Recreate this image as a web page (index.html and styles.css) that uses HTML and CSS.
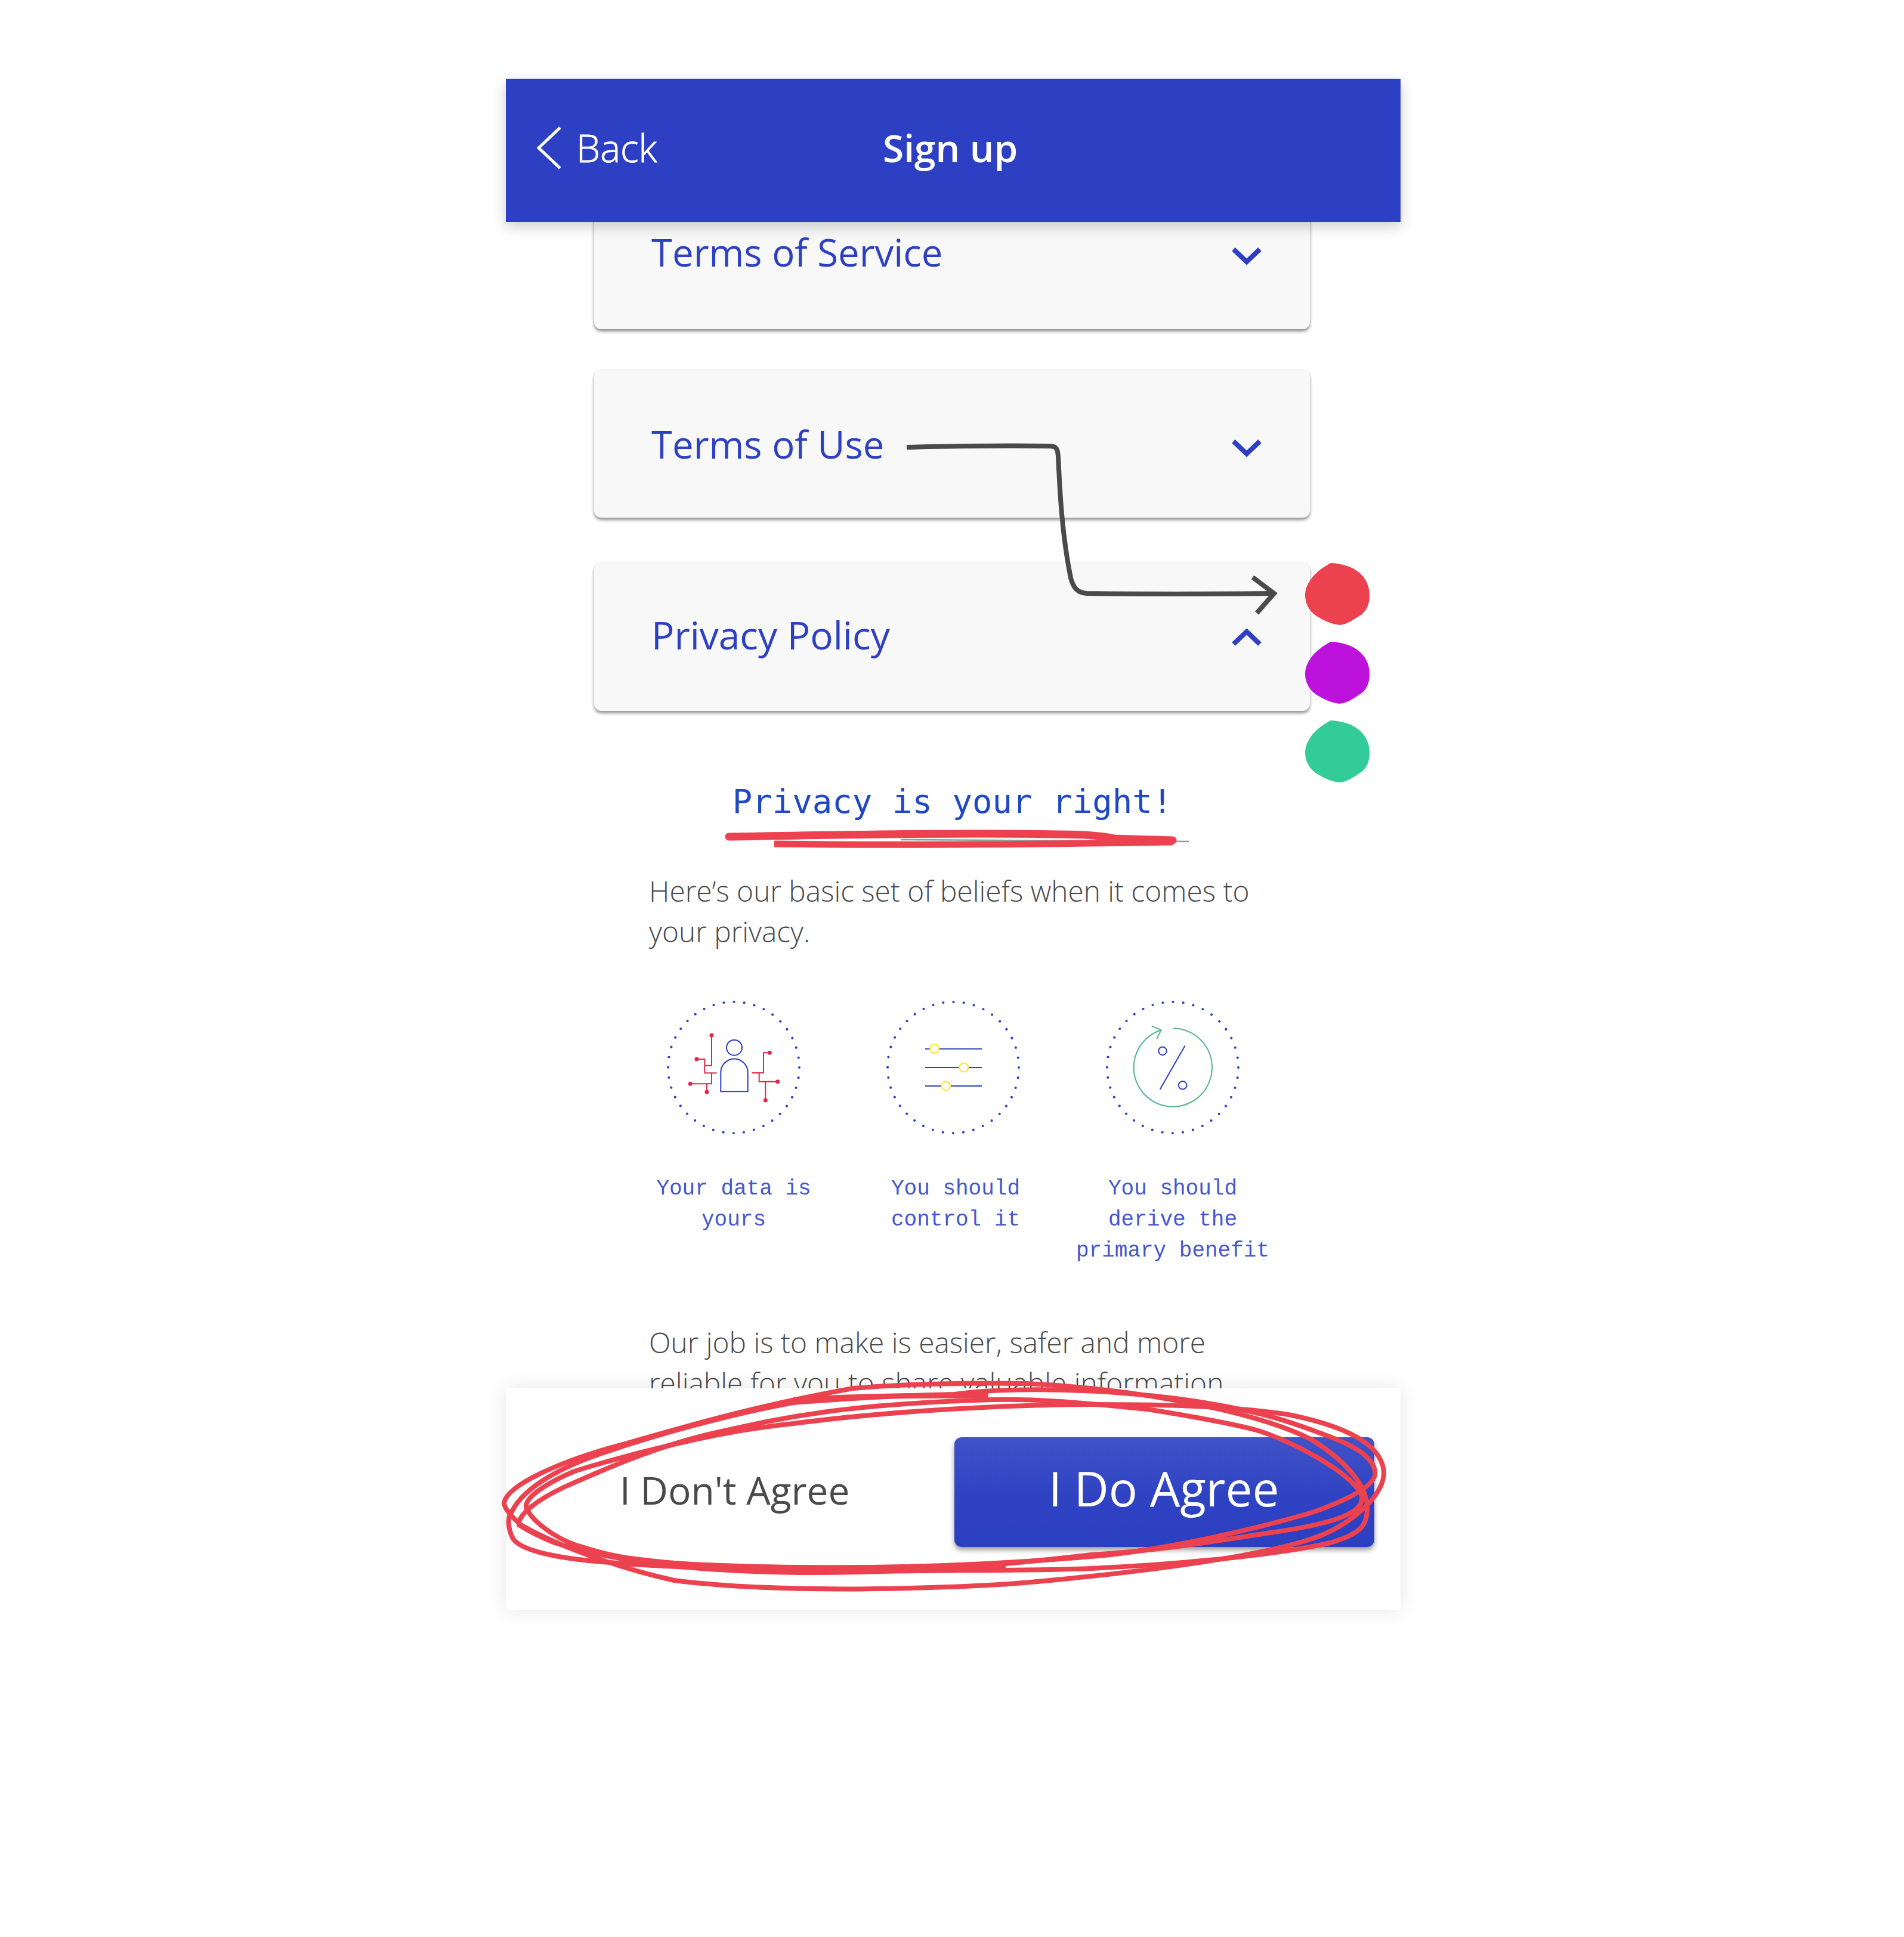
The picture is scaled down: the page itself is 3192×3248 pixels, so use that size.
FILE: index.html
```html
<!DOCTYPE html>
<html>

    <head>
        <meta charset="UTF-8">
        <title>Sign up</title>
        <link rel="stylesheet" href="styles.css">
    </head>

    <body>
        <div class="screen">
            <header class="topbar">
                <div class="back">
                    <svg class="back-icon" width="42" height="72" viewBox="0 0 42 72"><path d="M39 2 L3 36 L39 70"/></svg>
                    <span>Back</span>
                </div>
                <h1 class="title">Sign up</h1>
            </header>

            <main class="scroller">
                <section class="card card-service">
                    <span>Terms of Service</span>
                    <svg class="chevron" width="50" height="30" viewBox="0 0 50 30"><path d="M3 4 L25 25 L47 4"/></svg>
                </section>
                <section class="card card-use">
                    <span>Terms of Use</span>
                    <svg class="chevron" width="50" height="30" viewBox="0 0 50 30"><path d="M3 4 L25 25 L47 4"/></svg>
                </section>
                <section class="card card-privacy">
                    <span class="card-privacy-text">Privacy Policy</span>
                    <svg class="chevron chevron-up" width="50" height="30" viewBox="0 0 50 30"><path d="M3 26 L25 5 L47 26"/></svg>
                </section>

                <h2 class="heading">Privacy is your right!</h2>
                <p class="copy copy-first">Here’s our basic set of beliefs when it comes to your privacy.</p>

                <div class="beliefs">
                    <div class="belief">
                        <svg class="belief-icon" width="240" height="240" viewBox="0 0 240 240">
                            <circle class="ring" cx="120" cy="120" r="110"/>
                            <g class="red-line">
                                <path d="M83 66 V116.7 H71.3"/>
                                <path d="M58 106 H71.3 V129.3 H91.7"/>
                                <path d="M83 129.3 V147.3 H47.3"/>
                                <path d="M75 147.3 V161"/>
                                <path d="M150.3 129 H170 V95.3 H180.3"/>
                                <path d="M162.7 129 V143.7 H193.7"/>
                                <path d="M173.3 143.7 V175"/>
                            </g>
                            <g class="red-node">
                                <circle cx="83" cy="66" r="3.5"/>
                                <circle cx="58" cy="106" r="3.5"/>
                                <circle cx="47.3" cy="147.3" r="3.5"/>
                                <circle cx="75" cy="161" r="3.5"/>
                                <circle cx="180.3" cy="95.3" r="3.5"/>
                                <circle cx="193.7" cy="143.7" r="3.5"/>
                                <circle cx="173.3" cy="175" r="3.5"/>
                            </g>
                            <g class="blue-line">
                                <circle cx="121" cy="86.7" r="13"/>
                                <path d="M98.3 160.3 V128.3 A22.7 22.7 0 0 1 143.7 128.3 V160.3 Z"/>
                            </g>
                        </svg>
                        <p class="belief-label">Your data is yours</p>
                    </div>
                    <div class="belief">
                        <svg class="belief-icon" width="240" height="240" viewBox="0 0 240 240">
                            <circle class="ring" cx="120" cy="120" r="110"/>
                            <g class="blue-line">
                                <path d="M73 88.7 H168"/>
                                <path d="M73 120 H168"/>
                                <path d="M73 151 H168"/>
                            </g>
                            <g class="knob">
                                <circle cx="88.7" cy="88.7" r="7.3"/>
                                <circle cx="137.7" cy="120" r="7.3"/>
                                <circle cx="107.7" cy="151" r="7.3"/>
                            </g>
                        </svg>
                        <p class="belief-label belief-label-mid">You should control it</p>
                    </div>
                    <div class="belief">
                        <svg class="belief-icon" width="240" height="240" viewBox="0 0 240 240">
                            <circle class="ring" cx="120" cy="120" r="110"/>
                            <g class="green-line">
                                <path d="M120.7 54.3 A65.7 65.7 0 1 1 100.7 57.3"/>
                                <path d="M84.7 50.3 L100.7 57.3 L93 72"/>
                            </g>
                            <g class="blue-line">
                                <circle cx="103" cy="92.3" r="6.8"/>
                                <circle cx="136.7" cy="149.7" r="6.8"/>
                                <path d="M140.7 83.3 L98.7 156.7"/>
                            </g>
                        </svg>
                        <p class="belief-label">You should derive the primary benefit</p>
                    </div>
                </div>

                <p class="copy copy-last">Our job is to make is easier, safer and more reliable for you to share valuable information</p>
            </main>

            <footer class="actions">
                <span class="decline">I Don't Agree</span>
                <button class="agree">I Do Agree</button>
            </footer>
        </div>

        <!-- hand drawn marks on top of the mockup -->
        <svg class="marks" width="3192" height="3248" viewBox="0 0 3192 3248">
            <path class="arrow" d="M1520 750 C1600 748 1690 747 1760 748 C1772 748 1773 754 1774 765 C1777 830 1781 900 1795 969 C1800 988 1808 994 1822 995 C1900 996 2040 996 2136 995"/>
            <path class="arrow" d="M2100 968 L2136 995 L2107 1028"/>

            <path class="blob" transform="translate(2188 944)" fill="#ec414f" d="M43 0 C62 1 76 6 85 12 C100 22 108 36 108 55 C108 70 102 82 92 88 C80 96 70 103 58 104 C45 103 30 96 19 89 C7 81 0 68 0 54 C0 42 6 32 12 24 C20 14 32 6 43 0 Z"/>
            <path class="blob" transform="translate(2188 1076)" fill="#bd11dc" d="M43 0 C62 1 76 6 85 12 C100 22 108 36 108 55 C108 70 102 82 92 88 C80 96 70 103 58 104 C45 103 30 96 19 89 C7 81 0 68 0 54 C0 42 6 32 12 24 C20 14 32 6 43 0 Z"/>
            <path class="blob" transform="translate(2188 1208)" fill="#33cc99" d="M43 0 C62 1 76 6 85 12 C100 22 108 36 108 55 C108 70 102 82 92 88 C80 96 70 103 58 104 C45 103 30 96 19 89 C7 81 0 68 0 54 C0 42 6 32 12 24 C20 14 32 6 43 0 Z"/>

            <path class="pencil" d="M1510 1408 L1993 1411"/>
            <g class="scribble">
                <path class="under-top" d="M1222 1403 C1400 1400 1600 1396 1774 1399 C1820 1399 1850 1402 1868 1406 L1966 1409"/>
                <path class="under-low" d="M1298 1415 C1500 1418 1800 1415 1966 1412"/>

                <path d="M845 2520 C850 2490 940 2450 1040 2423 C1130 2398 1250 2360 1430 2328 C1500 2322 1600 2318 1720 2320 C1900 2328 2100 2365 2197 2413 C2250 2445 2295 2490 2292 2533 C2290 2560 2280 2572 2230 2587 C2150 2605 2000 2622 1830 2630 C1700 2635 1400 2635 1130 2625 C1000 2622 880 2610 860 2580 C850 2560 852 2545 856 2535"/>
                <path d="M845 2520 C845 2530 860 2545 873 2557 C950 2600 1050 2632 1130 2650 C1250 2665 1400 2667 1560 2662 C1700 2658 1760 2650 1830 2643 C1950 2630 2110 2610 2200 2580 C2260 2560 2320 2510 2320 2470 C2318 2420 2250 2390 2160 2372 C2050 2355 1900 2355 1830 2355 C1700 2355 1500 2365 1330 2387 C1200 2400 1050 2440 963 2467 C920 2485 880 2510 882 2527"/>
                <path d="M882 2527 C890 2550 930 2578 963 2590 C1010 2605 1040 2612 1073 2615 C1150 2625 1250 2628 1340 2628 C1500 2630 1650 2625 1830 2610 C1950 2600 2100 2565 2197 2537 C2260 2515 2310 2490 2305 2467 C2300 2430 2230 2410 2197 2397 C2150 2380 2120 2372 2097 2367 C2020 2350 1950 2340 1840 2333 C1750 2328 1650 2330 1600 2338 C1500 2340 1420 2345 1330 2352 C1230 2370 1100 2405 1000 2440 C930 2465 870 2500 855 2542"/>
                <path d="M870 2557 C868 2540 900 2515 947 2493 C1010 2465 1100 2425 1197 2403 C1300 2380 1400 2355 1663 2347 C1750 2345 1840 2355 1923 2363 C2000 2375 2080 2390 2113 2400 C2200 2430 2290 2490 2283 2515 C2280 2545 2200 2560 2130 2570 C2050 2582 1950 2600 1830 2607 C1650 2628 1500 2638 1340 2637 C1200 2635 1050 2625 930 2587 C900 2575 885 2567 870 2557"/>
                <path class="under-bundle" d="M1050 2620 C1250 2632 1450 2635 1680 2629"/>
                <path class="under-tail" d="M1330 2347 C1450 2340 1550 2340 1657 2340"/>
            </g>
        </svg>
    </body>

</html>
```

FILE: styles.css
```css
html, body {
    margin: 0;
    background-color: white;
}

body {
    position: relative;
    width: 3192px;
    height: 3248px;
    overflow: hidden;
    font-family: "Open Sans", sans-serif;
}

.screen {
    width: 1500px;
    margin-left: 848px;
    padding-top: 132px;
}

/* top bar */
.topbar {
    position: relative;
    z-index: 2;
    display: flex;
    align-items: center;
    box-sizing: border-box;
    height: 240px;
    padding-bottom: 9px;
    background-color: #2d40c4;
    color: white;
    box-shadow: 0 8px 22px rgba(0, 0, 0, 0.2);
}

.back {
    display: flex;
    align-items: center;
    gap: 24px;
    width: 580px;
    padding-left: 52px;
    font-size: 64px;
    font-weight: 300;
    -webkit-text-stroke: 1px white;
}

.back-icon path {
    fill: none;
    stroke: white;
    stroke-width: 5;
}

.title {
    margin: 0;
    font-size: 64px;
    font-weight: 600;
}

/* scrolling part */
.scroller {
    height: 1956px;
    overflow: hidden;
}

.card {
    display: flex;
    align-items: center;
    justify-content: space-between;
    width: 1200px;
    box-sizing: border-box;
    margin-left: 148px;
    padding: 0 81px 0 96px;
    border-radius: 12px;
    background-color: #f8f8f8;
    color: #2d40c4;
    font-size: 63.5px;
    box-shadow: 0 4px 5px rgba(0, 0, 0, 0.4), 0 0 4px rgba(0, 0, 0, 0.07);
}

.card-service {
    height: 260px;
    margin-top: -80px;
}

.card-use {
    height: 248px;
    margin-top: 68px;
}

.card-privacy {
    height: 248px;
    margin-top: 76px;
}

.card-privacy-text {
    margin-bottom: 8px;
    font-size: 64px;
}

.chevron {
    margin-top: 14px;
}

.chevron-up {
    margin-top: 2px;
}

.chevron path {
    fill: none;
    stroke: #2d40c4;
    stroke-width: 8;
}

.heading {
    margin: 117px 0 0 0;
    padding-right: 3px;
    text-align: center;
    font-family: "DejaVu Sans Mono", monospace;
    font-size: 55.7px;
    font-weight: 400;
    line-height: 70px;
    color: #1f49c4;
}

.copy {
    width: 1070px;
    margin: 0 0 0 240px;
    font-size: 47.8px;
    font-weight: 300;
    line-height: 68px;
    color: #4a4a4a;
}

.copy-first {
    margin-top: 81px;
}

.copy-last {
    margin-top: 93px;
}

/* three round icons */
.beliefs {
    display: grid;
    grid-template-columns: repeat(3, 368px);
    margin: 74px 0 0 198px;
}

.belief {
    text-align: center;
}

.belief-icon {
    display: block;
    margin: 0 auto;
}

.belief-label {
    width: 340px;
    margin: 58px auto 0 auto;
    font-family: "Liberation Mono", monospace;
    font-size: 36px;
    line-height: 52px;
    color: #4456d0;
}

.belief-label-mid {
    padding-left: 8px;
    box-sizing: border-box;
}

.ring {
    fill: none;
    stroke: #2d40c4;
    stroke-width: 4.2;
    stroke-linecap: round;
    stroke-dasharray: 0 17.279;
}

.red-line path {
    fill: none;
    stroke: #e0264b;
    stroke-width: 2;
}

.red-node {
    fill: #e0264b;
}

.blue-line circle,
.blue-line path {
    fill: none;
    stroke: #2d40c4;
    stroke-width: 2;
}

.knob {
    fill: white;
    stroke: #ffe733;
    stroke-width: 2.2;
}

.green-line path {
    fill: none;
    stroke: #55b58f;
    stroke-width: 2;
}

/* bottom buttons */
.actions {
    position: relative;
    z-index: 2;
    display: flex;
    align-items: center;
    justify-content: space-between;
    box-sizing: border-box;
    height: 372px;
    padding: 0 44px 24px 191px;
    background-color: white;
    box-shadow: 0 0 30px rgba(0, 0, 0, 0.1);
}

.decline {
    margin-bottom: 8px;
    font-size: 64px;
    color: #4a4a4a;
}

.agree {
    width: 704px;
    height: 184px;
    padding: 0 2px 16px 0;
    border: 0;
    border-radius: 12px;
    background: linear-gradient(to bottom, #4152c8, #2e42c2 55%, #2b3fc1);
    color: white;
    font-family: "Open Sans", sans-serif;
    font-size: 80px;
    box-shadow: 0 5px 8px rgba(0, 0, 0, 0.4);
}

/* annotations */
.marks {
    position: absolute;
    left: 0;
    top: 0;
    z-index: 3;
}

.arrow {
    fill: none;
    stroke: #4a4a4a;
    stroke-width: 8;
}

.pencil {
    fill: none;
    stroke: #999999;
    stroke-width: 2.5;
}

.scribble path {
    fill: none;
    stroke: #ec414f;
    stroke-width: 8;
    stroke-linecap: round;
}

.scribble .under-top {
    stroke-width: 13;
}

.scribble .under-low {
    stroke-width: 11;
    stroke-linecap: butt;
}

.scribble .under-bundle {
    stroke-width: 13;
}

.scribble .under-tail {
    stroke-width: 9;
    stroke-linecap: butt;
}
```
